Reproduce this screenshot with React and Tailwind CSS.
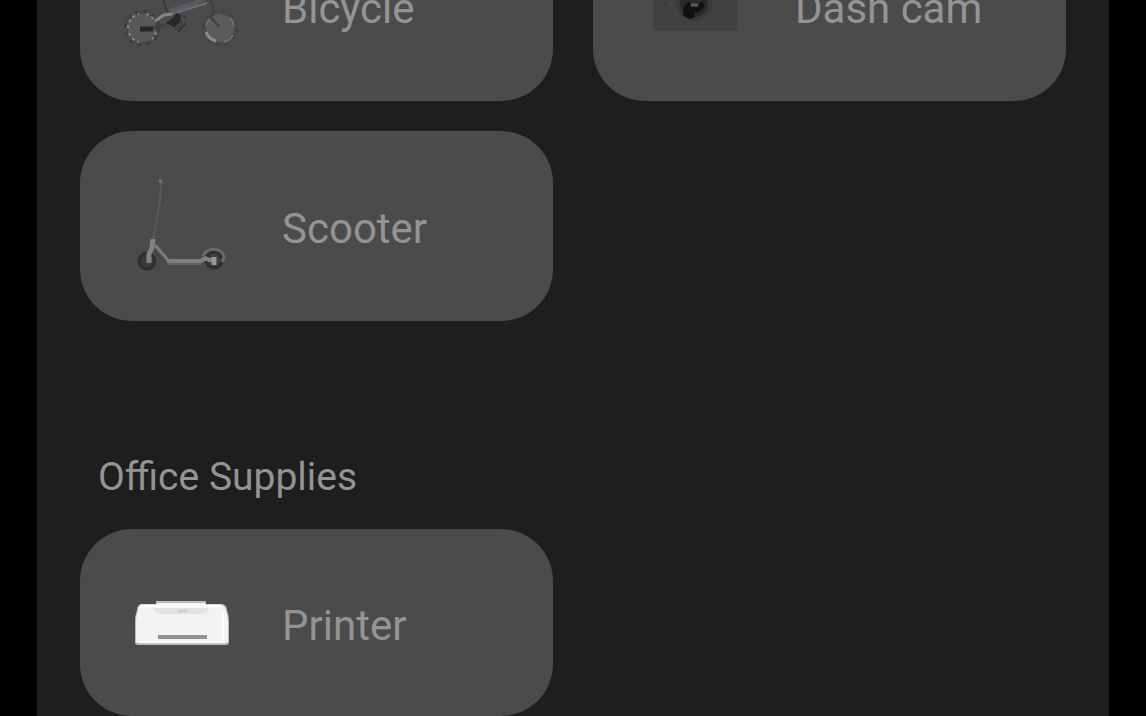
function BicycleArt() {
  return (
    <svg viewBox="0 0 120 120" className="size-[120px] shrink-0" fill="none" aria-hidden="true">
      <circle cx="22" cy="82" r="15" fill="#585858" stroke="#474747" strokeWidth="2" />
      <circle cx="22" cy="82" r="17" stroke="#3c3c3c" strokeWidth="2" strokeDasharray="4 5" />
      <path d="M8 82a14 14 0 0 1 11-14M26 68a14 14 0 0 1 9 8M9 87a14 14 0 0 0 10 9M36 86a14 14 0 0 1-4 7" stroke="#888" strokeWidth="2" strokeDasharray="3 3" />
      <circle cx="100" cy="82" r="15" fill="#5b5b5b" stroke="#4a4a4a" strokeWidth="2" />
      <circle cx="100" cy="82" r="17" stroke="#404040" strokeWidth="2" strokeDasharray="4 5" />
      <path d="M86 86a14 14 0 0 0 10 9" stroke="#8c8c8c" strokeWidth="3" />
      <path d="M86 80a14 14 0 0 1 4-7M110 72a14 14 0 0 1 4 8M104 96a14 14 0 0 0 9-7" stroke="#6e6e6e" strokeWidth="2" />
      <path d="M38 34l9 32" stroke="#3b3b3b" strokeWidth="2" />
      <path d="M42 44h44" stroke="#4f545a" strokeWidth="3" />
      <path d="M50 65c14-4 26-6 38-16" stroke="#565b61" strokeWidth="5" />
      <path d="M52 68l35-11" stroke="#6a6e72" strokeWidth="2" />
      <path d="M88 42l6 24M94 64l-3 8 8 8" stroke="#3f3f3f" strokeWidth="2" />
      <path d="M20 83h13" stroke="#272727" strokeWidth="5" />
      <path d="M33 82l12-3" stroke="#3f3f3f" strokeWidth="3" />
      <path d="M35 75l9-6 8-1" stroke="#858585" strokeWidth="3" />
      <circle cx="58" cy="79" r="7" fill="#434343" stroke="#575757" strokeWidth="1" />
      <path d="M46 77l7-5 3-5 5 2-1 7-6 5z" fill="#272727" />
      <path d="M58 86l8-9M63 70l3 2" stroke="#363636" strokeWidth="2" />
    </svg>
  );
}

function DashCamArt() {
  return (
    <svg viewBox="0 0 120 120" className="size-[120px] shrink-0" fill="none" aria-hidden="true">
      <rect x="20" y="34" width="84" height="52" rx="6" fill="#414141" />
      <path d="M25 86h74" stroke="#525252" strokeWidth="1" />
      <circle cx="61" cy="57" r="18" fill="#393939" />
      <circle cx="61" cy="57" r="14" fill="#292929" />
      <path d="M51 60l5-5 2 6 7-1 4-5 3 5-6 6-5 1 1 4-6 2-6-4z" fill="#101010" />
      <path d="M58 59h7" stroke="#5a5a5a" strokeWidth="3" />
      <path d="M30 57l3 3M33 57l-3 3" stroke="#303030" strokeWidth="1" />
    </svg>
  );
}

function ScooterArt() {
  return (
    <svg viewBox="0 0 120 120" className="size-[120px] shrink-0" fill="none" aria-hidden="true">
      <path d="M41 16l-1 20-7 38" stroke="#5b5956" strokeWidth="2" />
      <path d="M45 19l3 5-3 7-4 7" stroke="#434343" strokeWidth="1" />
      <path d="M39 15h3" stroke="#747474" strokeWidth="3" />
      <circle cx="27" cy="95" r="8" fill="#3a3a3a" stroke="#303030" strokeWidth="3" />
      <circle cx="94" cy="94" r="8" fill="#404040" stroke="#303030" strokeWidth="3" />
      <path d="M33 73l-1 9-3 6v9" stroke="#828282" strokeWidth="5" />
      <path d="M35 79l13 15" stroke="#7c7c7c" strokeWidth="3" />
      <path d="M34 84l7 9" stroke="#404040" strokeWidth="2" />
      <path d="M47 95h34l4-3 4 2h6" stroke="#808080" strokeWidth="4" />
      <path d="M48 98h33" stroke="#626262" strokeWidth="2" />
      <path d="M83 90c4-9 19-9 21 1l-2 5" stroke="#6b6b6b" strokeWidth="3" />
      <path d="M94 91v8" stroke="#969696" strokeWidth="5" />
    </svg>
  );
}

function PrinterArt() {
  return (
    <svg viewBox="0 0 120 120" className="size-[120px] shrink-0" fill="none" aria-hidden="true">
      <path d="M21 41h15v-3h50v3h16q5 1 5 6 2 5 2 12v20q0 3-3 3H18q-3 0-3-3V59q0-7 2-12 0-5 4-6z" fill="#bdbdbd" />
      <path d="M21 42h16v-2h48v2h17q3 1 4 6 2 5 2 12v18q0 2-2 2H19q-3 0-3-2V59q0-7 2-11 0-5 3-6z" fill="#f3f3f3" />
      <path d="M21 43h80" stroke="#fbfbfb" strokeWidth="3" />
      <path d="M33 45h56q-2 6-9 6H43q-8 0-10-6z" fill="#e3e3e3" />
      <path d="M58 48h9" stroke="#d0d0d0" strokeWidth="3" />
      <path d="M103 48v30M20 79h83" stroke="#fff" strokeWidth="2" />
      <path d="M38 72h49v4H38z" fill="#929292" />
    </svg>
  );
}

function DeviceCard({ label, art: Art }) {
  return (
    <button
      type="button"
      className="flex items-center gap-[42px] rounded-[52px] bg-[#4b4b4b] pl-10 text-left text-[42px] leading-[50px] text-[#949494]"
    >
      <Art />
      <span className="pt-[6px]">{label}</span>
    </button>
  );
}

export default function App() {
  return (
    <div className="h-screen overflow-hidden bg-black px-[37px] font-[Roboto,sans-serif]">
      <main className="h-full overflow-hidden bg-[#1e1e1e] px-[43px]">
        <section aria-label="Travel" className="-mt-[89px] grid auto-rows-[190px] grid-cols-2 gap-x-10 gap-y-[30px]">
          <DeviceCard label="Bicycle" art={BicycleArt} />
          <DeviceCard label="Dash cam" art={DashCamArt} />
          <DeviceCard label="Scooter" art={ScooterArt} />
        </section>
        <section className="pt-[132px]">
          <h2 className="px-[18px] text-[39px] leading-12 text-[#949494]">Office Supplies</h2>
          <div className="mt-7 grid auto-rows-[187px] grid-cols-2 gap-x-10">
            <DeviceCard label="Printer" art={PrinterArt} />
          </div>
        </section>
      </main>
    </div>
  );
}
